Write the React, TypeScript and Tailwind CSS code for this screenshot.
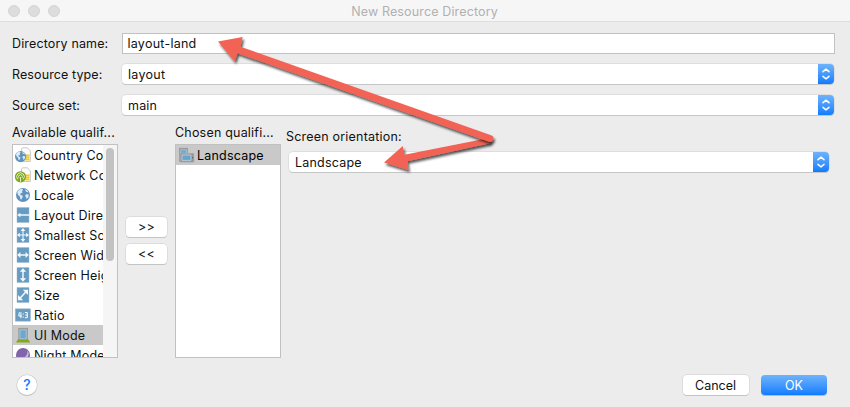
import React from "react";

function Stepper() {
  return (
    <span className="flex h-5 w-4 shrink-0 items-center justify-center rounded-r-[4px] bg-linear-to-b from-[#6db3fa] to-[#0a7cff]">
      <svg width="10" height="14" viewBox="0 0 10 14" fill="none" stroke="#fff" strokeWidth="1.5" strokeLinecap="round" strokeLinejoin="round">
        <path d="M2 4.7 5 2.2l3 2.5M2 9.3 5 11.8l3-2.5" />
      </svg>
    </span>
  );
}

function Select({ value, className }: { value: string; className: string }) {
  return (
    <div className={`flex h-5 items-center justify-between rounded-[4px] bg-white pl-[6px] shadow-[0_0_0_0.5px_#cfcfcf,0_1px_0.5px_#bdbdbd] ${className}`}>
      <span className="relative top-px">{value}</span>
      <Stepper />
    </div>
  );
}

function Globe() {
  return (
    <>
      <circle cx="8" cy="8" r="7" fill="#5f93bd" />
      <path d="M2.2 5c1-2 2.8-3 4.8-3.3l1 1-1 1.6.6 1-1.6 1.2-1.2.5 1.4 1.2 1.6.6-.5 2.1-1.3 1.8-.6-.7-.5-2.6-1.9-1.5zM10.2 2.2l2.6 1.6.7 1.6-1.7-.5-1.3-.8zM11 7.2l2.8.3-.5 2.9-1.6 1.7-.7-2.2-1-1z" fill="#dcebf5" />
    </>
  );
}

function Sheet() {
  return (
    <>
      <path d="M7.5.8h5L15.4 4v10.5H6.5V2z" fill="#fbfbfb" stroke="#bdbdbd" strokeWidth=".8" />
      <path d="M10.5 7.5h4v6h-4z" fill="#f5c81d" />
      <path d="M10.5 9.5h4M10.5 11.5h4" stroke="#fff3a0" strokeWidth=".5" />
    </>
  );
}

function Icon({ kind }: { kind: string }) {
  let art: React.ReactNode = null;
  if (kind === "country")
    art = (<><Sheet /><g transform="translate(-.8 3.2) scale(.8)"><Globe /></g></>);
  else if (kind === "network")
    art = (
      <>
        <Sheet />
        <circle cx="5.5" cy="9.8" r="5.6" fill="#7ca522" />
        <path d="M2.8 12.3a3.8 3.8 0 1 1 5.4 0M4 10.8a1.9 1.9 0 1 1 3 0M5.5 10v4.8" fill="none" stroke="#eff6d9" strokeWidth=".9" />
      </>
    );
  else if (kind === "locale") art = <Globe />;
  else if (kind === "ratio")
    art = (
      <>
        <rect x=".2" y="1.8" width="15.4" height="12.4" fill="#6a9cc1" stroke="#a9c4d8" strokeWidth=".6" />
        <path d="M4.4 5.2 3.7 9h3.1M5.9 5.2v6M8.2 6.4v1.2M8.2 9.4v1.2M9.9 5.5h2.4v5.2H9.9M10.2 8h2.1" fill="none" stroke="#fff" strokeWidth="1" />
      </>
    );
  else if (kind === "ui")
    art = (
      <>
        <path d="M3.2.9h9.8v12H3.2z" fill="#9a9d9c" />
        <path d="M5 2.8h6.2v9H5z" fill="#6ba8d0" stroke="#bdd0dc" strokeWidth=".7" />
        <path d="M2.7 12.6h10.8l1.7 2.8H1z" fill="#85a91d" />
      </>
    );
  else if (kind === "night")
    art = (
      <>
        <circle cx="8" cy="8" r="7" fill="#8065a9" />
        <path d="M12.3 3.3c.7 4.8-2 7.5-7.2 8.7 5.5 1.6 9.2-2.2 8.5-6.3z" fill="#c9bce0" />
      </>
    );
  else if (kind === "orientation")
    art = (
      <>
        <path d="M1 .8h9v14H1z" fill="#999c9e" />
        <path d="M2.7 2.8h5.7v4H2.7z" fill="#6ba8d2" stroke="#cad4da" strokeWidth=".6" />
        <path d="M2 6.2h14v9H2z" fill="#929698" stroke="#b5b7b8" strokeWidth=".6" />
        <path d="M4 8h9v5.4H4z" fill="#65a5d0" stroke="#d1dce3" strokeWidth=".7" />
        <circle cx="14.7" cy="10.7" r=".6" fill="#555" />
      </>
    );
  else {
    const shafts: Record<string, string> = {
      direction: "M14.2 8H4",
      smallest: "M8 3v10M3.5 8h9",
      width: "M4 8h8",
      height: "M8 4v8",
      size: "M5 11.2 11 4.8",
    };
    const heads: Record<string, string> = {
      direction: "M2.2 8 5.4 5.8v4.4z",
      smallest: "M8 1 10.4 4H5.6zM8 15l2.4-3H5.6zM2 8l2.8-2.3v4.6zM14 8l-2.8-2.3v4.6z",
      width: "M2.2 8 5.4 5v6zM13.8 8 10.6 5v6z",
      height: "M8 1.3 11.2 4.8H4.8zM8 14.7l3.2-3.5H4.8z",
      size: "M13 2.8v5.2L7.8 2.8zM3 13.2V8l5.2 5.2z",
    };
    art = (
      <>
        <path d="M2 .5h12v15H2z" fill="#669bc2" stroke="#9abbd1" strokeWidth=".5" />
        <path d={shafts[kind]} stroke="#f4f9fc" strokeWidth={kind === "smallest" ? 1.1 : 1.5} />
        <path d={heads[kind]} fill="#f4f9fc" />
      </>
    );
  }
  return <svg className="shrink-0 overflow-visible" width="16" height="16" viewBox="0 0 16 16">{art}</svg>;
}

const qualifiers = [
  ["country", "Country Code"],
  ["network", "Network Code"],
  ["locale", "Locale"],
  ["direction", "Layout Direction"],
  ["smallest", "Smallest Screen"],
  ["width", "Screen Width"],
  ["height", "Screen Height"],
  ["size", "Size"],
  ["ratio", "Ratio"],
  ["ui", "UI Mode"],
  ["night", "Night Mode"],
];

const button = "flex h-5 items-center justify-center rounded-[4px] bg-white shadow-[0_0_0_0.5px_#cccccc,0_1px_0.5px_#bdbdbd]";

function Arrows() {
  return (
    <svg className="pointer-events-none absolute inset-0" width="850" height="407" viewBox="0 0 850 407">
      <defs>
        <filter id="shade" x="-10%" y="-20%" width="120%" height="150%">
          <feDropShadow dx="1.5" dy="2.5" stdDeviation="1.2" floodColor="#000" floodOpacity=".65" />
        </filter>
      </defs>
      <g fill="#f26354" filter="url(#shade)">
        <path d="M384 162.5 402.8 146l1.6 8.7L489 138l2 5-83.8 18.3 1.3 8.7z" />
      </g>
      <g fill="#f26354" filter="url(#shade)">
        <path d="M218 41.5 242.7 37l-2.2 9.7L491 135.3a3.4 3.4 0 0 1-2 6.5L237.5 53.2l-2.8 8.3z" />
      </g>
    </svg>
  );
}

export default function App() {
  return (
    <div className="relative flex h-[407px] w-[850px] flex-col overflow-hidden bg-[#ececec] font-['Inter',sans-serif] text-[12.5px] leading-5 tracking-[0.2px] whitespace-nowrap text-[#111111]">
      <header className="flex h-[22px] shrink-0 items-center border-b border-[#dedede] bg-[#f6f6f6] pl-2">
        <div className="flex w-[52px] gap-2">
          <i className="size-3 rounded-full border border-[#d5d5d5] bg-[#dddddd]" />
          <i className="size-3 rounded-full border border-[#d5d5d5] bg-[#dddddd]" />
          <i className="size-3 rounded-full border border-[#d5d5d5] bg-[#dddddd]" />
        </div>
        <h1 className="mr-[61px] flex-1 pt-[2px] text-center tracking-[0.14px] text-[#b1b1b1]">New Resource Directory</h1>
      </header>

      <div className="flex flex-col pt-[11px] pl-3">
        <div className="flex h-[31px]">
          <label className="w-[110px] pt-px tracking-[0.15px]">Directory name:</label>
          <div className="h-[21px] w-[713px] border border-[#c1c1c1] bg-white pl-[4.5px] tracking-[0.25px]">layout-land</div>
        </div>
        <div className="flex h-[31px]">
          <label className="w-[110px] pt-px tracking-[0.1px]">Resource type:</label>
          <Select value="layout" className="w-[712px] tracking-[0.3px]" />
        </div>
        <div className="flex h-[31px]">
          <label className="w-[110px] pt-px tracking-[0.1px]">Source set:</label>
          <Select value="main" className="w-[712px]" />
        </div>
      </div>

      <main className="flex h-[232px] shrink-0 pl-3">
        <section className="w-[106px]">
          <h2 className="h-[18px] leading-[14px]">Available qualif...</h2>
          <div className="flex h-[214px] overflow-hidden border border-[#c1c1c1] bg-white">
            <ul className="w-[90px] overflow-hidden">
              {qualifiers.map(([kind, name]) => (
                <li key={kind} className={`flex h-5 items-center gap-[3px] pl-[2px] ${kind === "ui" ? "bg-[#c9c9c9]" : ""}`}>
                  <Icon kind={kind} />
                  <span className="relative top-px">{name}</span>
                </li>
              ))}
            </ul>
            <div className="flex flex-1 justify-center bg-[#f5f5f5] pt-[3px]">
              <i className="h-[113px] w-2 rounded-full bg-[#c2c2c2]" />
            </div>
          </div>
        </section>
        <div className="flex w-[57px] flex-col gap-[7px] pt-[91px] pl-2">
          <button className={`${button} w-[41px]`}>&gt;&gt;</button>
          <button className={`${button} w-[41px]`}>&lt;&lt;</button>
        </div>
        <section className="w-[106px]">
          <h2 className="h-[18px] leading-[14px]">Chosen qualifi...</h2>
          <div className="h-[214px] border border-[#c1c1c1] bg-white">
            <div className="flex h-5 items-center gap-[3px] bg-[#c9c9c9] pl-[2px]">
              <Icon kind="orientation" />
              <span className="relative top-px text-black">Landscape</span>
            </div>
          </div>
        </section>
        <section className="pt-[1px] pl-[5px]">
          <h2 className="h-[25px]">Screen orientation:</h2>
          <Select value="Landscape" className="ml-[3px] w-[540px]" />
        </section>
      </main>

      <footer className="flex pt-[17px] pl-[17px]">
        <button className="flex size-5 items-center justify-center rounded-full bg-white text-[14px] font-medium text-[#0a7cff] shadow-[0_0_0_0.5px_#c4c4c4,0_1px_1px_#bdbdbd]">?</button>
        <button className={`${button} ml-[645.5px] w-[66px] pt-px tracking-normal`}>Cancel</button>
        <button className="ml-[12.5px] flex h-5 w-[66px] items-center justify-center rounded-[4px] bg-linear-to-b from-[#6db3fa] to-[#0a7cff] pt-px tracking-normal text-white shadow-[0_1px_0.5px_#a9bdd5]">OK</button>
      </footer>
      <Arrows />
    </div>
  );
}
